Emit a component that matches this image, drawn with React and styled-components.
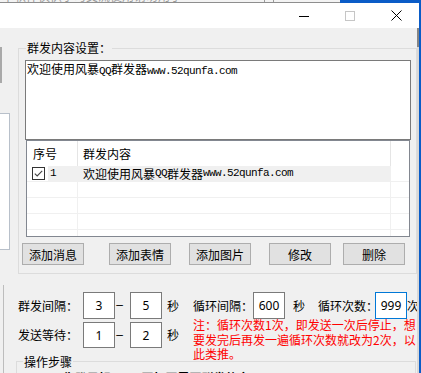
import React from "react";
import styled, { createGlobalStyle } from "styled-components";

const GlobalStyle = createGlobalStyle`
  html, body {
    margin: 0;
    padding: 0;
    background: #f0f0f0;
  }
  body {
    font-family: "Noto Sans CJK SC", "Noto Sans", sans-serif;
    font-size: 12px;
    color: #000;
  }
`;

const Screen = styled.div`
  width: 421px;
  height: 373px;
  overflow: hidden;
  display: flex;
  flex-direction: column;
  background: #f0f0f0;
`;

// strip of the window behind
const BackStrip = styled.div`
  height: 3px;
  flex-shrink: 0;
  display: flex;
`;

const BackTitle = styled.div`
  width: 340px;
  display: flex;
  overflow: hidden;
  background: #f3f3f3;
  border-bottom: 1px solid #8e8e8e;
  box-sizing: border-box;
`;

const BackText = styled.span`
  margin-top: -10px;
  margin-left: ${(p) => p.$ml || 0}px;
  font-size: 12px;
  line-height: 12px;
  color: #9a9a9a;
  white-space: nowrap;
`;

const BackSep = styled.span`
  width: 1px;
  margin-left: ${(p) => p.$ml}px;
  background: #9a9a9a;
`;

const BackAccent = styled.div`
  flex: 1;
  background: #0a5cc7;
`;

const Frame = styled.div`
  flex: 1;
  min-height: 0;
  display: flex;
`;

const Window = styled.div`
  width: 419px;
  display: flex;
  flex-direction: column;
`;

const Accent = styled.div`
  width: 2px;
  background: #0a5cc7;
`;

const TitleBar = styled.div`
  height: 25px;
  flex-shrink: 0;
  display: flex;
  justify-content: flex-end;
  background: #fff;
`;

const CaptionButton = styled.div`
  width: 46px;
  height: 25px;
  display: flex;
  align-items: center;
  justify-content: center;
`;

const Body = styled.div`
  flex: 1;
  min-height: 0;
  display: flex;
  background: #f0f0f0;
`;

const LeftDecor = styled.div`
  width: 10px;
  display: flex;
  flex-direction: column;
`;

const DarkLine = styled.div`
  width: 2px;
  height: 36px;
  margin-top: 19px;
  background: #a9a9a9;
`;

const SideBox = styled.div`
  height: 137px;
  margin-top: 30px;
  box-sizing: border-box;
  border: 1px solid #b8c0ca;
  border-left: none;
  background: #fff;
`;

const ThinLine = styled.div`
  flex: 1;
  width: 1px;
  margin: 35px 0 0 3px;
  background: #bdbdbd;
`;

const Main = styled.div`
  width: 407px;
  padding-left: 8px;
  box-sizing: border-box;
  display: flex;
  flex-direction: column;
`;

const ScrollEdge = styled.div`
  width: 2px;
  display: flex;
  flex-direction: column;
  background: #d8d8d8;
`;

const ScrollThumb = styled.div`
  height: 19px;
  background: #858585;
`;

const GroupBox = styled.fieldset`
  margin: ${(p) => p.$mt}px 0 0 ${(p) => p.$ml || 0}px;
  width: ${(p) => p.$w}px;
  box-sizing: border-box;
  min-width: 0;
  border: 1px solid #dcdcdc;
  padding: ${(p) => p.$pad};
  display: flex;
  flex-direction: column;
`;

const Legend = styled.legend`
  margin-left: ${(p) => p.$ml}px;
  padding: 0 1px;
  font-size: 12px;
  line-height: 14px;
`;

const TextBox = styled.div`
  height: 80px;
  margin-left: 3px;
  box-sizing: border-box;
  border: 1px solid #7a7a7a;
  background: #fff;
  padding: 1px 1px 0;
  font-size: 12px;
  line-height: 14px;
  white-space: nowrap;
`;

const Lat = styled.span`
  font-family: "Liberation Mono", monospace;
  font-size: 11px;
  letter-spacing: -0.6px;
`;

const ListView = styled.div`
  height: 97px;
  margin: 0 1px 0 4px;
  box-sizing: border-box;
  border: 1px solid #828790;
  background: #fff;
  overflow: hidden;
`;

const Grid = styled.div`
  display: grid;
  grid-template-columns: 51px 313px 1fr;
  height: ${(p) => p.$h}px;
  box-sizing: border-box;
  border-bottom: ${(p) => (p.$line ? "1px solid #f0f0f0" : "none")};
`;

const HeadCell = styled.div`
  border-right: ${(p) => (p.$last ? "none" : "1px solid #e5e5e5")};
  padding-left: ${(p) => p.$pl || 0}px;
  line-height: 25px;
  font-size: 12px;
  color: #000;
`;

const Cell = styled.div`
  display: flex;
  align-items: center;
  border-right: ${(p) => (p.$last ? "none" : "1px solid #f0f0f0")};
  padding-left: ${(p) => p.$pl || 0}px;
  background: ${(p) => (p.$sel ? "#f0f0f0" : "transparent")};
  font-size: 12px;
  line-height: 15px;
  white-space: nowrap;
`;

const CheckBox = styled.svg`
  margin-left: 5px;
  flex-shrink: 0;
`;

const IndexText = styled.span`
  flex: 1;
  align-self: stretch;
  display: flex;
  align-items: center;
  margin-left: 3px;
  padding-left: 2px;
  background: #f0f0f0;
`;

const ButtonRow = styled.div`
  display: flex;
  margin-top: 6px;
`;

const Button = styled.div`
  width: 62px;
  height: 22px;
  margin-left: ${(p) => p.$ml}px;
  box-sizing: border-box;
  border: 1px solid #adadad;
  background: #e1e1e1;
  display: flex;
  align-items: center;
  justify-content: center;
  font-size: 12px;
`;

const FieldRow = styled.div`
  display: flex;
  align-items: flex-start;
  margin-top: ${(p) => p.$mt}px;
  height: ${(p) => p.$h}px;
`;

const Label = styled.span`
  width: ${(p) => p.$w}px;
  margin-left: ${(p) => p.$ml || 0}px;
  flex-shrink: 0;
  line-height: ${(p) => p.$h}px;
  font-size: 12px;
  white-space: nowrap;
`;

const SpinBox = styled.div`
  width: 32px;
  height: ${(p) => p.$h}px;
  flex-shrink: 0;
  box-sizing: border-box;
  border: 1px solid ${(p) => (p.$focus ? "#0078d7" : "#7a7a7a")};
  background: #fff;
  display: flex;
  align-items: center;
  justify-content: center;
  font-family: "Noto Sans", "Liberation Sans", sans-serif;
  font-size: 12px;
`;

const Dash = styled.span`
  width: 15px;
  padding-right: 6px;
  box-sizing: border-box;
  flex-shrink: 0;
  text-align: center;
  line-height: ${(p) => p.$h}px;
  font-family: "Liberation Sans", sans-serif;
  font-size: 12px;
`;

const Note = styled.div`
  width: 224px;
  margin: -4px 0 0 14px;
  flex-shrink: 0;
  color: #ff0000;
  font-size: 12px;
  line-height: 14.5px;
`;

const StepText = styled.div`
  margin-top: 2px;
  padding-left: 22px;
  font-size: 12px;
  font-weight: bold;
  line-height: 14px;
  white-space: nowrap;
`;

const Minimize = () => (
  <svg width="10" height="10" viewBox="0 0 10 10">
    <line x1="0" y1="5.5" x2="10" y2="5.5" stroke="#000" strokeWidth="1" />
  </svg>
);

const Maximize = () => (
  <svg width="10" height="10" viewBox="0 0 10 10">
    <rect x="0.5" y="0.5" width="9" height="9" fill="none" stroke="#c6c6c6" strokeWidth="1" />
  </svg>
);

const Close = () => (
  <svg width="11" height="11" viewBox="0 0 11 11">
    <path d="M0.5 0.5 L10.5 10.5 M10.5 0.5 L0.5 10.5" stroke="#000" strokeWidth="1" />
  </svg>
);

const Check = () => (
  <CheckBox width="13" height="13" viewBox="0 0 13 13">
    <rect x="0.5" y="0.5" width="12" height="12" fill="#fff" stroke="#333" />
    <path d="M2.8 6.6 L5.2 9 L10.2 3.8" fill="none" stroke="#444" strokeWidth="1.1" />
  </CheckBox>
);

const Message = () => (
  <>
    欢迎使用风暴<Lat>QQ</Lat>群发器<Lat>www.52qunfa.com</Lat>
  </>
);

const buttons = [
  { text: "添加消息", ml: 0 },
  { text: "添加表情", ml: 25 },
  { text: "添加图片", ml: 18 },
  { text: "修改", ml: 18 },
  { text: "删除", ml: 12 },
];

const App = () => {
  return (
    <Screen>
      <GlobalStyle />
      <BackStrip>
        <BackTitle>
          <BackText $ml={2}>本软件仅供学习交流使用请勿用于</BackText>
          <BackSep $ml={82} />
          <BackSep $ml={8} />
          <BackText $ml={38}>^</BackText>
        </BackTitle>
        <BackAccent />
      </BackStrip>
      <Frame>
        <Window>
          <TitleBar>
            <CaptionButton>
              <Minimize />
            </CaptionButton>
            <CaptionButton>
              <Maximize />
            </CaptionButton>
            <CaptionButton>
              <Close />
            </CaptionButton>
          </TitleBar>
          <Body>
            <LeftDecor>
              <DarkLine />
              <SideBox />
              <ThinLine />
            </LeftDecor>
            <Main>
              <GroupBox $mt={13} $w={399} $pad="5px 5px 8px 3px">
                <Legend $ml={4}>群发内容设置：</Legend>
                <TextBox>
                  <Message />
                </TextBox>
                <ListView>
                  <Grid $h={25}>
                    <HeadCell $pl={6}>序号</HeadCell>
                    <HeadCell $pl={5}>群发内容</HeadCell>
                    <HeadCell $last />
                  </Grid>
                  <Grid $h={16} $line>
                    <Cell>
                      <Check />
                      <IndexText>
                        <Lat>1</Lat>
                      </IndexText>
                    </Cell>
                    <Cell $pl={5} $sel>
                      <Message />
                    </Cell>
                    <Cell $last />
                  </Grid>
                  {[0, 1, 2, 3].map((i) => (
                    <Grid key={i} $h={16} $line>
                      <Cell />
                      <Cell />
                      <Cell $last />
                    </Grid>
                  ))}
                </ListView>
                <ButtonRow>
                  {buttons.map((b) => (
                    <Button key={b.text} $ml={b.ml}>
                      {b.text}
                    </Button>
                  ))}
                </ButtonRow>
              </GroupBox>

              <FieldRow $mt={18} $h={27}>
                <Label $w={65} $h={27}>群发间隔：</Label>
                <SpinBox $h={27}>3</SpinBox>
                <Dash $h={27}>–</Dash>
                <SpinBox $h={27}>5</SpinBox>
                <Label $w={12} $ml={5} $h={27}>秒</Label>
                <Label $w={60} $ml={14} $h={27}>循环间隔：</Label>
                <SpinBox $h={27}>600</SpinBox>
                <Label $w={12} $ml={8} $h={27}>秒</Label>
                <Label $w={57} $ml={13} $h={27}>循环次数：</Label>
                <SpinBox $h={27} $focus>999</SpinBox>
                <Label $w={12} $ml={0} $h={27}>次</Label>
              </FieldRow>

              <FieldRow $mt={3} $h={39.5}>
                <Label $w={65} $h={26}>发送等待：</Label>
                <SpinBox $h={26}>1</SpinBox>
                <Dash $h={26}>–</Dash>
                <SpinBox $h={26}>2</SpinBox>
                <Label $w={12} $ml={5} $h={26}>秒</Label>
                <Note>
                  注：循环次数1次，即发送一次后停止，想要发完后再发一遍循环次数就改为2次，以此类推。
                </Note>
              </FieldRow>

              <GroupBox $mt={-7} $ml={-2} $w={400} $pad="0">
                <Legend $ml={6}>操作步骤</Legend>
                <StepText>一、先登录好QQ，再打开需要群发的窗口</StepText>
              </GroupBox>
            </Main>
            <ScrollEdge>
              <ScrollThumb />
            </ScrollEdge>
          </Body>
        </Window>
        <Accent />
      </Frame>
    </Screen>
  );
};

export default App;
